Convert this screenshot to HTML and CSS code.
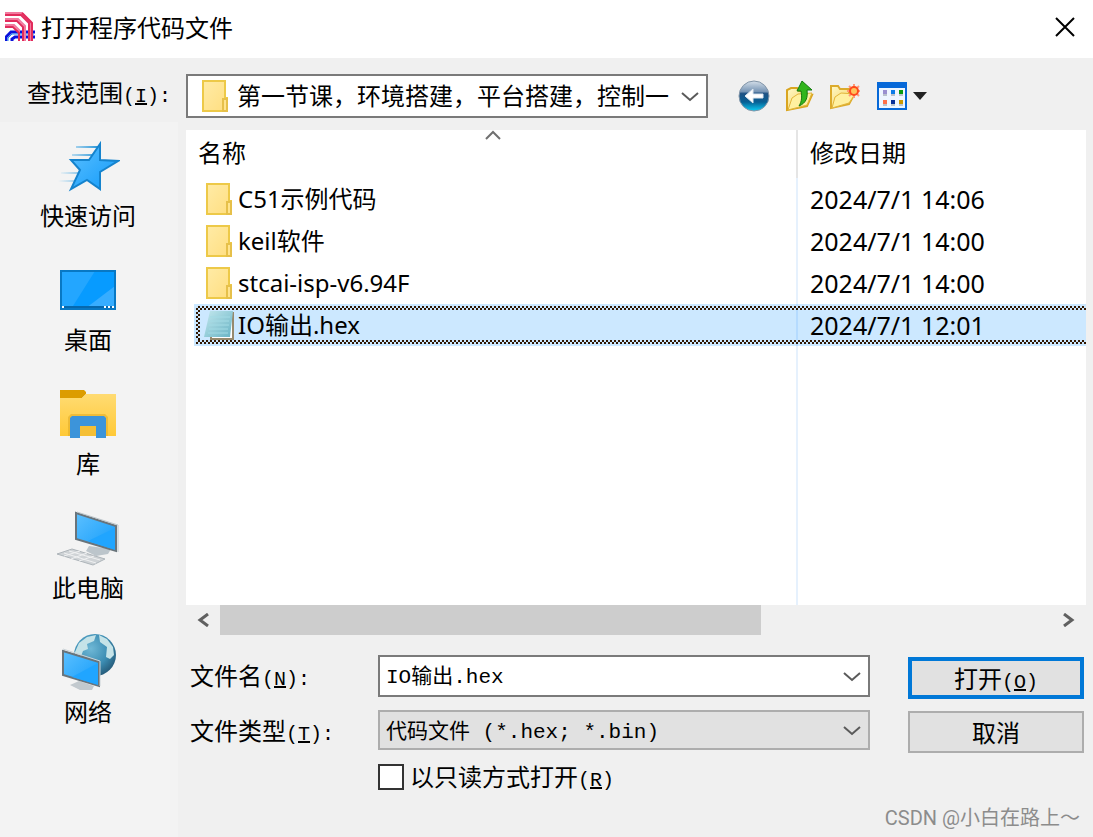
FILE: index.html
```html
<!DOCTYPE html>
<html lang="zh-CN">

<head>
    <meta charset="UTF-8">
    <meta name="viewport" content="width=device-width, initial-scale=1.0">
    <title>打开程序代码文件</title>
    <link rel="stylesheet" href="styles.css">
</head>

<body>

    <!-- Shared icons -->
    <svg class="sprite" aria-hidden="true">
        <defs>
            <linearGradient id="folderFill" x1="0" y1="0" x2="1" y2="1">
                <stop offset="0" stop-color="#ffeba6" />
                <stop offset="1" stop-color="#ffde80" />
            </linearGradient>
            <linearGradient id="noteFill" x1="0" y1="0" x2="1" y2="1">
                <stop offset="0" stop-color="#c4e8ee" />
                <stop offset="1" stop-color="#67b3c4" />
            </linearGradient>
            <linearGradient id="blueFill" x1="0" y1="0" x2="1" y2="1">
                <stop offset="0" stop-color="#5cc0ff" />
                <stop offset="1" stop-color="#129bfa" />
            </linearGradient>
            <linearGradient id="yellowFill" x1="0" y1="0" x2="0" y2="1">
                <stop offset="0" stop-color="#ffdb72" />
                <stop offset="1" stop-color="#ffc937" />
            </linearGradient>
            <linearGradient id="openFill" x1="0" y1="0" x2="1" y2="1">
                <stop offset="0" stop-color="#fff9c8" />
                <stop offset="1" stop-color="#f3cc55" />
            </linearGradient>
            <linearGradient id="ballFill" x1="0" y1="0" x2="0" y2="1">
                <stop offset="0" stop-color="#d5dfe9" />
                <stop offset="0.35" stop-color="#7795b5" />
                <stop offset="0.42" stop-color="#1f5284" />
                <stop offset="0.7" stop-color="#075f94" />
                <stop offset="1" stop-color="#0bcdf5" />
            </linearGradient>
            <radialGradient id="globeFill" cx="0.4" cy="0.35" r="0.7">
                <stop offset="0" stop-color="#6fb8d6" />
                <stop offset="0.6" stop-color="#3c8db3" />
                <stop offset="1" stop-color="#245876" />
            </radialGradient>
            <linearGradient id="speed" x1="0" y1="0" x2="1" y2="0">
                <stop offset="0" stop-color="#4aaee8" stop-opacity="0" />
                <stop offset="1" stop-color="#2b96d8" />
            </linearGradient>
        </defs>
        <symbol id="folder" viewBox="0 0 26 32">
            <path d="M1 1h22v17h2v13H1z" fill="url(#folderFill)" stroke="#edc948" stroke-width="2" />
            <path d="M21 31V19h4v12z" fill="#ffe48f" stroke="#e6c04a" stroke-width="2" />
        </symbol>
        <symbol id="chevron" viewBox="0 0 18 12">
            <path d="M1 2l8 7 8-7" fill="none" stroke="#5a5a5a" stroke-width="2" />
        </symbol>
    </svg>

    <div class="dialog">
        <header class="title-bar">
            <svg class="app-icon" viewBox="0 0 30 30" fill="none" aria-hidden="true">
                <g stroke="#0a12dc" stroke-width="3">
                    <path d="M1 29v-4l5-5h24M7 29v-2l3-2h20" />
                </g>
                <path d="M3 29v-3l4-4h22" stroke="#1d8cf0" stroke-width="1" />
                <g stroke="#f27a9f" stroke-width="2">
                    <path d="M0 1h17l9 9v19M0 7h13l7 7v15M0 13h9l5 5v11" />
                </g>
                <g stroke="#e22c5c" stroke-width="2">
                    <path d="M0 3h16l8 8v18M0 9h12l6 6v14M17 1l10 10v18M0 15h8l6 6v8" />
                </g>
            </svg>
            <h1>打开程序代码文件</h1>
            <button type="button" class="close" aria-label="关闭">
                <svg width="20" height="20" viewBox="0 0 20 20" aria-hidden="true">
                    <path d="M1 1l18 18M19 1L1 19" stroke="#000" stroke-width="2" />
                </svg>
            </button>
        </header>

        <div class="toolbar">
            <label for="lookIn">查找范围<span class="latin">(<u>I</u>):</span></label>
            <div class="combo look-in">
                <svg class="combo-icon" width="26" height="32" aria-hidden="true"><use href="#folder" /></svg>
                <select id="lookIn">
                    <option>第一节课，环境搭建，平台搭建，控制一</option>
                </select>
                <svg class="arrow" width="18" height="12" aria-hidden="true"><use href="#chevron" /></svg>
            </div>
            <div class="tools">
                <button type="button" aria-label="返回">
                    <svg width="32" height="32" viewBox="0 0 32 32" aria-hidden="true">
                        <circle cx="16" cy="16" r="15" fill="url(#ballFill)" stroke="#8295a8" stroke-width="1" />
                        <path d="M7 16l8-7v5h10v4H15v5z" fill="#fff" stroke="#dde6ef" stroke-width="1" />
                    </svg>
                </button>
                <button type="button" aria-label="向上一级">
                    <svg width="28" height="32" viewBox="0 0 28 32" aria-hidden="true">
                        <path d="M1 30V10l4-2h6l2 3h7v5l6-1-5 11z" fill="url(#openFill)" stroke="#d9a520" stroke-width="2" />
                        <path d="M2 30l4-12 6-4 14-1-5 12z" fill="#fff0a0" stroke="#e2b53a" stroke-width="1" />
                        <path d="M13 26c3-5 3-9 2-15h-4l5-10 10 9h-5c1 8-1 13-8 16z" fill="#32b51c" stroke="#137a0e" stroke-width="1" />
                    </svg>
                </button>
                <button type="button" aria-label="新建文件夹">
                    <svg width="31" height="32" viewBox="0 0 31 32" aria-hidden="true">
                        <path d="M1 28V6h7l2 3h9v6h5l-5 9z" fill="url(#openFill)" stroke="#dcab2c" stroke-width="2" />
                        <path d="M2 28l3-11 6-4 14 1-6 9z" fill="#fff0a0" stroke="#e2b53a" stroke-width="1" />
                        <path d="M24 4v14M17 11h13M19 6l10 10M29 6L19 16" stroke="#ff9a78" stroke-width="2" />
                        <circle cx="24" cy="11" r="4" fill="#ffc45c" stroke="#ff4a1c" stroke-width="2" />
                    </svg>
                </button>
                <button type="button" class="view" aria-label="查看菜单">
                    <svg width="52" height="28" viewBox="0 0 52 28" aria-hidden="true">
                        <path d="M1 1h28v26H1z" fill="#eef6ff" stroke="#0668d8" stroke-width="2" />
                        <path d="M0 0h30v6H0z" fill="#0668d8" />
                        <path d="M6 8h4v4H6z" fill="#9a90d0" />
                        <path d="M14 8h4v4h-4z" fill="#0a7be8" />
                        <path d="M22 8h4v4h-4z" fill="#079a10" />
                        <path d="M6 18h4v4H6z" fill="#ff7048" />
                        <path d="M14 18h4v4h-4z" fill="#06309a" />
                        <path d="M22 18h4v4h-4z" fill="#cc9800" />
                        <path d="M6 12h4v2H6zM14 12h4v2h-4zM22 12h4v2h-4zM6 22h4v2H6zM14 22h4v2h-4zM22 22h4v2h-4z" fill="#b9c2cc" />
                        <path d="M36 10h14l-7 8z" fill="#222" />
                    </svg>
                </button>
            </div>
        </div>

        <div class="content">
            <nav class="places">
                <button type="button">
                    <svg width="64" height="56" viewBox="0 0 64 56" aria-hidden="true">
                        <path d="M20 8h22v2H20zM16 16h20v2H16zM5 34h20v2H5zM2 42h20v2H2z" fill="url(#speed)" />
                        <path d="M44 6v16l18 1-18 11v17l-13-9-16 9 9-19-9-10h18z" fill="url(#blueFill)" stroke="#1583cd" stroke-width="2" />
                    </svg>
                    <span>快速访问</span>
                </button>
                <button type="button">
                    <svg width="56" height="56" viewBox="0 0 56 56" aria-hidden="true">
                        <path d="M1 9h54v38H1z" fill="#079bff" />
                        <path d="M1 9h34L13 44H1z" fill="#23a6ff" />
                        <path d="M55 24v22H26z" fill="#37adff" />
                        <path d="M1 44h54v3H1z" fill="#0668ad" />
                        <path d="M1 9h54v38H1z" fill="none" stroke="#0878c4" stroke-width="2" />
                        <path d="M2 44h2v2H2zM44 44h2v2h-2zM48 44h2v2h-2zM52 44h2v2h-2z" fill="#fff" />
                    </svg>
                    <span>桌面</span>
                </button>
                <button type="button">
                    <svg width="56" height="56" viewBox="0 0 56 56" aria-hidden="true">
                        <path d="M0 4h24l2 2v2l-4 4H0z" fill="#dc9c00" />
                        <path d="M0 12h22l4-4h30v42H0z" fill="url(#yellowFill)" />
                        <path d="M8 50V31l3-3h34l3 3v19z" fill="#e3ad28" opacity="0.6" />
                        <path d="M10 52V32l2-2h32l2 2v20H36V40H20v12z" fill="#3c94da" />
                        <path d="M20 40h16v10H20z" fill="#f5bf35" />
                    </svg>
                    <span>库</span>
                </button>
                <button type="button">
                    <svg width="64" height="56" viewBox="0 0 64 56" aria-hidden="true">
                        <path d="M33 36l-3 5 10 5 12-2 3-5z" fill="#bcc5cb" />
                        <path d="M1 44l15-5 33 10-12 6z" fill="#cfd3d6" stroke="#aeb5ba" stroke-width="1" />
                        <path d="M8 43l32 10M13 41l31 9M8 46l16-5M15 49l16-6M23 51l15-5" stroke="#f0f1f2" stroke-width="1" />
                        <path d="M20 3l40 13v25L20 29z" fill="url(#blueFill)" stroke="#69747b" stroke-width="2" />
                        <path d="M59 18v22L32 31z" fill="#20a5ff" />
                        <path d="M21 2l41 13v27" fill="none" stroke="#bdc6cb" stroke-width="1" />
                    </svg>
                    <span>此电脑</span>
                </button>
                <button type="button">
                    <svg width="56" height="56" viewBox="0 0 56 56" aria-hidden="true">
                        <circle cx="35" cy="21" r="21" fill="url(#globeFill)" />
                        <path d="M15 18l4-9 8-6 9-2-2 6-7 3 1 5-5 2-3 8-5-2zM39 1l8 4 6 8 1 8-4 4-4-2 1-10-7-5z" fill="#c5e3e8" />
                        <path d="M10 51l9-4 15 5-2 4-10 1z" fill="#c2c9ce" />
                        <path d="M3 17l36 11v24L3 41z" fill="url(#blueFill)" stroke="#69747b" stroke-width="2" />
                        <path d="M38 29v22L12 43z" fill="#20a5ff" />
                        <path d="M3 15l37 12v25" fill="none" stroke="#ccd4d8" stroke-width="1" />
                    </svg>
                    <span>网络</span>
                </button>
            </nav>

            <main class="main">
                <div class="file-list">
                    <table>
                        <colgroup>
                            <col>
                            <col class="date-col">
                        </colgroup>
                        <thead>
                            <tr>
                                <th>名称
                                    <svg class="sort" width="18" height="10" viewBox="0 0 18 10" aria-hidden="true">
                                        <path d="M2 9l7-7 7 7" fill="none" stroke="#707070" stroke-width="2" />
                                    </svg>
                                </th>
                                <th>修改日期</th>
                            </tr>
                        </thead>
                        <tbody>
                            <tr>
                                <td>
                                    <div class="file"><svg width="26" height="32" aria-hidden="true"><use href="#folder" /></svg>C51示例代码</div>
                                </td>
                                <td>2024/7/1 14:06</td>
                            </tr>
                            <tr>
                                <td>
                                    <div class="file"><svg width="26" height="32" aria-hidden="true"><use href="#folder" /></svg>keil软件</div>
                                </td>
                                <td>2024/7/1 14:00</td>
                            </tr>
                            <tr>
                                <td>
                                    <div class="file"><svg width="26" height="32" aria-hidden="true"><use href="#folder" /></svg>stcai-isp-v6.94F</div>
                                </td>
                                <td>2024/7/1 14:00</td>
                            </tr>
                            <tr class="selected">
                                <td>
                                    <div class="file">
                                        <svg class="note" width="30" height="32" viewBox="0 0 30 32" aria-hidden="true">
                                            <path d="M7 4h22v26H7z" fill="#fff" stroke="#96896d" stroke-width="2" />
                                            <path d="M6 2h23l-3 26H0z" fill="url(#noteFill)" />
                                            <path d="M6 8h20M6 12h19M5 16h20M5 20h19M4 24h20" stroke="#a3dbe5" stroke-width="1" />
                                        </svg>IO输出.hex
                                    </div>
                                </td>
                                <td>2024/7/1 12:01</td>
                            </tr>
                            <tr class="rest">
                                <td></td>
                                <td></td>
                            </tr>
                        </tbody>
                    </table>
                </div>

                <div class="scrollbar">
                    <button type="button" aria-label="向左滚动">
                        <svg width="12" height="14" viewBox="0 0 12 14" aria-hidden="true">
                            <path d="M11 1L3 7l8 6" fill="none" stroke="#606060" stroke-width="3" />
                        </svg>
                    </button>
                    <div class="track">
                        <div class="thumb"></div>
                    </div>
                    <button type="button" aria-label="向右滚动">
                        <svg width="12" height="14" viewBox="0 0 12 14" aria-hidden="true">
                            <path d="M1 1l8 6-8 6" fill="none" stroke="#606060" stroke-width="3" />
                        </svg>
                    </button>
                </div>

                <form class="open-form">
                    <div class="fields">
                        <label for="fileName">文件名<span class="latin">(<u>N</u>):</span></label>
                        <div class="combo">
                            <input type="text" id="fileName" value="IO输出.hex">
                            <svg class="arrow" width="18" height="12" aria-hidden="true"><use href="#chevron" /></svg>
                        </div>

                        <label for="fileType">文件类型<span class="latin">(<u>T</u>):</span></label>
                        <div class="combo file-type">
                            <select id="fileType">
                                <option>代码文件 (*.hex; *.bin)</option>
                            </select>
                            <svg class="arrow" width="18" height="12" aria-hidden="true"><use href="#chevron" /></svg>
                        </div>

                        <div class="read-only">
                            <input type="checkbox" id="readOnly">
                            <label for="readOnly">以只读方式打开<span class="latin">(<u>R</u>)</span></label>
                        </div>
                    </div>
                    <div class="actions">
                        <button type="button" class="default">打开<span class="latin">(<u>O</u>)</span></button>
                        <button type="button">取消</button>
                    </div>
                </form>

                <footer class="credit">CSDN @小白在路上～</footer>
            </main>
        </div>
    </div>

</body>

</html>
```

FILE: styles.css
```css
* {
    box-sizing: border-box;
}

body {
    margin: 0;
    background-color: #f0f0f0;
    color: #000;
    font-family: 'Noto Sans CJK SC', sans-serif;
    font-size: 24px;
    line-height: 32px;
}

button,
input,
select {
    margin: 0;
    font: inherit;
    color: inherit;
}

button {
    padding: 0;
    border: none;
    background: none;
}

svg {
    display: block;
    flex: none;
}

.sprite {
    position: absolute;
    width: 0;
    height: 0;
}

/* SimSun-like half width letters next to the Chinese text */
.latin {
    font-family: 'Liberation Mono', monospace;
    font-size: 20px;
    line-height: 20px;
}

.dialog {
    display: flex;
    flex-direction: column;
    min-height: 100vh;
}

/* Title bar */
.title-bar {
    display: flex;
    align-items: center;
    height: 58px;
    padding: 0 18px 4px 5px;
    background-color: #fff;
}

.app-icon {
    width: 30px;
    height: 30px;
}

.title-bar h1 {
    flex: 1;
    margin: 0 0 0 6px;
    font-size: 24px;
    font-weight: normal;
}

/* Toolbar */
.toolbar {
    display: flex;
    padding: 16px 0 4px;
}

.toolbar label {
    width: 186px;
    padding: 2px 0 0 27px;
}

.combo {
    position: relative;
    display: flex;
}

.combo select,
.combo input {
    width: 100%;
    height: 42px;
    padding: 0 40px 4px 6px;
    border: 2px solid #7a7a7a;
    border-radius: 0;
    background-color: #fff;
    appearance: none;
    font-family: 'Liberation Mono', 'Noto Sans CJK SC', monospace;
    font-size: 21px;
}

.combo select {
    padding-top: 5px;
    padding-bottom: 0;
}

.combo .arrow {
    position: absolute;
    right: 9px;
    top: 50%;
    margin-top: -5px;
    pointer-events: none;
}

.look-in {
    flex: 1;
}

.look-in select {
    height: 44px;
    padding-left: 49px;
    padding-right: 36px;
    font-size: 24px;
}

.combo-icon {
    position: absolute;
    left: 16px;
    top: 6px;
    pointer-events: none;
}

.tools {
    display: flex;
    align-items: center;
    gap: 16px;
    width: 385px;
    padding-left: 30px;
}

/* Places on the left */
.content {
    display: flex;
    flex: 1;
}

.places {
    display: flex;
    flex-direction: column;
    gap: 31px;
    width: 178px;
    padding: 16px 2px 0 0;
    background-color: #f3f3f3;
}

.places button {
    display: flex;
    flex-direction: column;
    align-items: center;
    gap: 5px;
}

.main {
    display: flex;
    flex-direction: column;
    flex: 1;
    padding: 8px 7px 0 8px;
}

/* File list */
.file-list {
    display: flex;
    flex: 1;
    padding-left: 8px;
    background-color: #fff;
}

.file-list table {
    width: 100%;
    table-layout: fixed;
    border-collapse: separate;
    border-spacing: 0;
    font-family: 'Noto Sans', 'Noto Sans CJK SC', sans-serif;
}

.date-col {
    width: 288px;
}

.file-list th {
    position: relative;
    height: 48px;
    padding: 0 4px 2px;
    font-weight: normal;
    text-align: left;
}

.file-list td {
    height: 42px;
    padding: 0;
}

.file-list .rest td {
    height: auto;
}

.file-list th:first-child {
    border-right: 2px solid #e5e5e5;
}

.file-list td:first-child {
    border-right: 2px solid #e6f1fd;
}

.file-list th:last-child,
.file-list td:last-child {
    padding-left: 12px;
}

.file-list td:last-child {
    font-size: 25px;
}

.sort {
    position: absolute;
    top: 0;
    left: 50%;
    margin-left: -11px;
}

.file {
    display: flex;
    align-items: center;
    gap: 6px;
    padding-left: 12px;
}

.file .note {
    margin: 0 -2px;
}

.file-list .selected {
    position: relative;
    background-color: #cce8ff;
}

.file-list .selected td:first-child {
    border-right-color: #b5dbff;
}

/* Focus rectangle */
.selected td:first-child::after {
    content: "";
    position: absolute;
    top: 2px;
    right: 0;
    bottom: 2px;
    left: 2px;
    pointer-events: none;
    --dots: repeating-conic-gradient(#331700 0 25%, #cce8ff 0 50%);
    background:
        var(--dots) 0 0 / 4px 4px repeat-x,
        var(--dots) 0 100% / 4px 4px repeat-x,
        var(--dots) 0 0 / 4px 4px repeat-y;
}

/* Scrollbar */
.scrollbar {
    display: flex;
    height: 30px;
}

.scrollbar button {
    display: grid;
    place-items: center;
    width: 34px;
}

.track {
    flex: 1;
}

.thumb {
    width: 65%;
    height: 100%;
    background-color: #cdcdcd;
}

/* File name, type and buttons */
.open-form {
    display: flex;
    align-items: flex-start;
    gap: 38px;
    padding: 20px 2px 0 4px;
}

.fields {
    display: grid;
    grid-template-columns: 188px 1fr;
    row-gap: 13px;
    flex: 1;
}

.fields > label {
    padding-top: 4px;
}

.file-type select {
    height: 40px;
    border-color: #adadad;
    background-color: #e1e1e1;
}

.read-only {
    display: flex;
    grid-column: 2;
    align-items: center;
    gap: 6px;
    line-height: 26px;
}

.read-only input {
    width: 26px;
    height: 26px;
    border: 2px solid #333;
    background-color: #fff;
    appearance: none;
}

.read-only input:checked {
    background-color: #0078d7;
}

.actions {
    display: flex;
    flex-direction: column;
    gap: 12px;
    width: 176px;
    padding-top: 2px;
}

.actions button {
    height: 42px;
    border: 2px solid #adadad;
    background-color: #e1e1e1;
}

.actions .default {
    border: 4px solid #0078d7;
}

.credit {
    padding: 11px 6px 3px 0;
    color: #8c8c8c;
    font-family: Roboto, 'Noto Sans CJK SC', sans-serif;
    font-size: 20px;
    text-align: right;
}
```
